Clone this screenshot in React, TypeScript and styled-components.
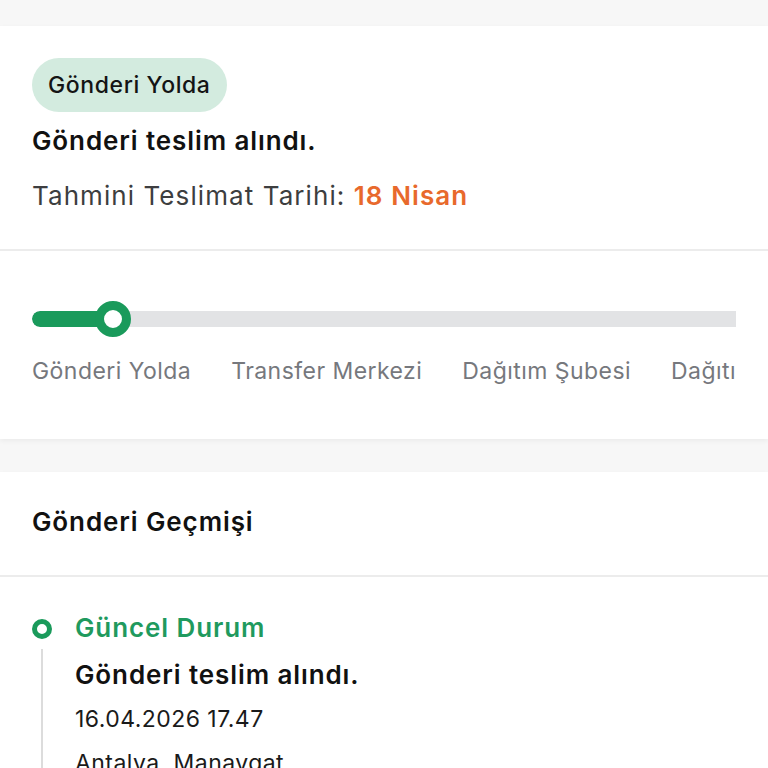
import styled, { createGlobalStyle } from 'styled-components'

const GlobalStyle = createGlobalStyle`
  html, body {
    margin: 0;
    padding: 0;
    background: #f7f7f7;
    font-family: Inter, "Noto Sans", sans-serif;
    -webkit-font-smoothing: antialiased;
  }
  * {
    box-sizing: border-box;
  }
`

const Page = styled.div`
  padding-top: 26px;
  display: flex;
  flex-direction: column;
  gap: 33px;
`

const Card = styled.div`
  background: #ffffff;
  box-shadow: 0 2px 5px rgba(0, 0, 0, 0.05);
`

const SummarySection = styled.div`
  padding: 32px 32px 37px;
  display: flex;
  flex-direction: column;
  border-bottom: 2px solid #ececec;
`

const StatusBadge = styled.div`
  align-self: flex-start;
  height: 54px;
  padding: 0 16px;
  border-radius: 27px;
  background: #d3ebdf;
  color: #141414;
  font-size: 23px;
  letter-spacing: 0.6px;
  font-weight: 500;
  display: flex;
  align-items: center;
`

const SummaryTitle = styled.div`
  margin-top: 13px;
  font-size: 26px;
  letter-spacing: 0.9px;
  line-height: 32px;
  font-weight: 600;
  color: #111111;
`

const EstimateLine = styled.div`
  margin-top: 23px;
  font-size: 26px;
  letter-spacing: 1.08px;
  line-height: 32px;
  color: #3d3e40;
`

const EstimateDate = styled.span`
  color: #e8692c;
  font-weight: 600;
`

const ProgressSection = styled.div`
  padding: 50px 32px 54px;
`

const TrackWrap = styled.div`
  position: relative;
  height: 36px;
  display: flex;
  align-items: center;
`

const Track = styled.div`
  width: 100%;
  height: 16px;
  border-radius: 8px 0 0 8px;
  background: #e2e3e5;
  overflow: hidden;
`

const TrackFill = styled.div`
  height: 100%;
  background: #1a9a5b;
  border-radius: 8px;
`

const Knob = styled.div`
  position: absolute;
  top: 0;
  width: 36px;
  height: 36px;
  border-radius: 50%;
  border: 9px solid #1a9a5b;
  background: #ffffff;
`

const StepLabels = styled.div`
  margin-top: 20px;
  display: flex;
  gap: 40px;
  white-space: nowrap;
  overflow: hidden;
`

const StepLabel = styled.div`
  font-size: 23px;
  letter-spacing: 0.45px;
  line-height: 28px;
  color: #76787d;
  flex-shrink: 0;
`

const HistoryHeader = styled.div`
  padding: 34px 32px 37px;
  font-size: 26px;
  letter-spacing: 0.9px;
  line-height: 32px;
  font-weight: 600;
  color: #111111;
  border-bottom: 2px solid #ececec;
`

const HistoryList = styled.div`
  padding: 34px 32px 0;
`

const HistoryItem = styled.div`
  display: grid;
  grid-template-columns: 20px 1fr;
  column-gap: 23px;
`

const Rail = styled.div`
  display: flex;
  flex-direction: column;
  align-items: center;
  padding-top: 8px;
`

const Dot = styled.div<{ $active?: boolean }>`
  width: 20px;
  height: 20px;
  border-radius: 50%;
  border: 5px solid ${(p) => (p.$active ? '#1a9a5b' : '#c9cacc')};
  background: #ffffff;
  flex-shrink: 0;
`

const RailLine = styled.div`
  width: 2px;
  flex: 1;
  margin-top: 10px;
  background: #dcdcdc;
`

const ItemBody = styled.div`
  display: flex;
  flex-direction: column;
  padding-bottom: 30px;
`

const ItemStatus = styled.div<{ $active?: boolean }>`
  font-size: 26px;
  letter-spacing: 0.9px;
  line-height: 34px;
  font-weight: 600;
  color: ${(p) => (p.$active ? '#1f9a5e' : '#111111')};
`

const ItemTitle = styled.div`
  margin-top: 14px;
  font-size: 26px;
  letter-spacing: 0.9px;
  line-height: 32px;
  font-weight: 600;
  color: #111111;
`

const ItemMeta = styled.div`
  margin-top: 12px;
  font-size: 23px;
  letter-spacing: 0.45px;
  line-height: 32px;
  color: #1a1a1a;
`

const steps = ['Gönderi Yolda', 'Transfer Merkezi', 'Dağıtım Şubesi', 'Dağıtımda', 'Teslim Edildi']

const App = () => {
  const knobLeft = 63
  return (
    <>
      <GlobalStyle />
      <Page>
        <Card>
          <SummarySection>
            <StatusBadge>Gönderi Yolda</StatusBadge>
            <SummaryTitle>Gönderi teslim alındı.</SummaryTitle>
            <EstimateLine>
              Tahmini Teslimat Tarihi: <EstimateDate>18 Nisan</EstimateDate>
            </EstimateLine>
          </SummarySection>
          <ProgressSection>
            <TrackWrap>
              <Track>
                <TrackFill style={{ width: knobLeft + 18 }} />
              </Track>
              <Knob style={{ left: knobLeft }} />
            </TrackWrap>
            <StepLabels>
              {steps.map((s) => (
                <StepLabel key={s}>{s}</StepLabel>
              ))}
            </StepLabels>
          </ProgressSection>
        </Card>
        <Card>
          <HistoryHeader>Gönderi Geçmişi</HistoryHeader>
          <HistoryList>
            <HistoryItem>
              <Rail>
                <Dot $active />
                <RailLine />
              </Rail>
              <ItemBody>
                <ItemStatus $active>Güncel Durum</ItemStatus>
                <ItemTitle>Gönderi teslim alındı.</ItemTitle>
                <ItemMeta>16.04.2026 17.47</ItemMeta>
                <ItemMeta>Antalya, Manavgat</ItemMeta>
              </ItemBody>
            </HistoryItem>
          </HistoryList>
        </Card>
      </Page>
    </>
  )
}

export default App
